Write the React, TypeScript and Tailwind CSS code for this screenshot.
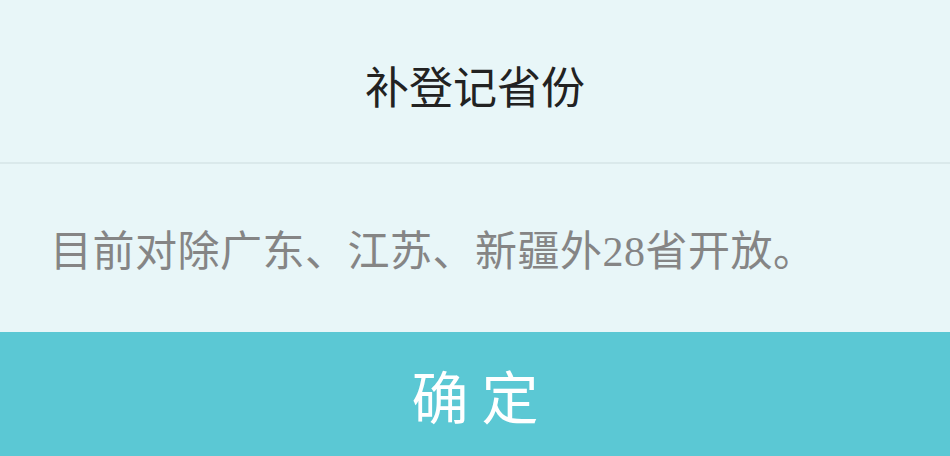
export default function App() {
  return (
    <div className="flex h-[456px] w-[950px] flex-col bg-[#e8f6f8] font-['Noto_Sans_CJK_SC',sans-serif]">
      {/* Dialog title */}
      <div className="flex h-[164px] items-center justify-center border-b-2 border-[#dae9eb] pt-2">
        <h1 className="text-[44px] leading-none text-[#222]">补登记省份</h1>
      </div>

      {/* Message */}
      <div className="flex flex-1 items-center px-[50px] pt-1">
        <p className="text-[42px] leading-none tracking-[0.5px] text-[#858585]">
          目前对除广东、江苏、新疆外
          <span className="font-['Liberation_Serif',serif]">28</span>
          省开放。
        </p>
      </div>

      {/* Confirm button */}
      <button className="flex h-[124px] shrink-0 items-center justify-center bg-[#5bc8d4] text-[57px] leading-none text-white">
        确 定
      </button>
    </div>
  );
}
